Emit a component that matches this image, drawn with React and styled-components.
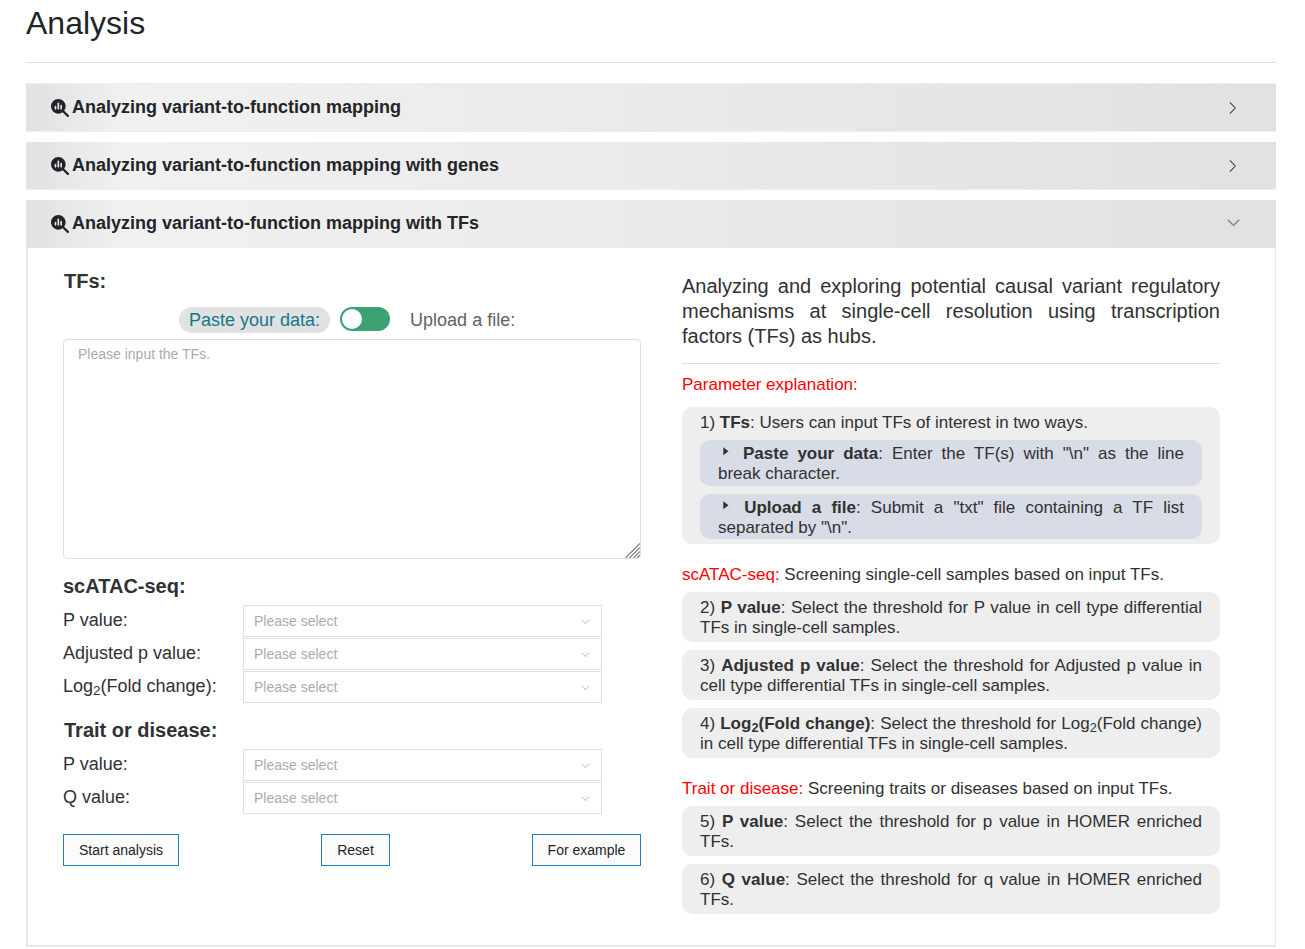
import React from "react";
import styled, { createGlobalStyle } from "styled-components";
import { FaMagnifyingGlassChart } from "react-icons/fa6";

const GlobalStyle = createGlobalStyle`
  *, *::before, *::after { box-sizing: border-box; }
  body {
    margin: 0;
    background: #fff;
    color: #212529;
    font-family: "Liberation Sans", Arial, sans-serif;
  }
  sub { font-size: 75%; line-height: 0; position: relative; bottom: -0.25em; vertical-align: baseline; }
`;

const Page = styled.main`
  padding: 4px 29px 0 26px;
`;

const Title = styled.h2`
  margin: 0;
  padding-bottom: 20px;
  font-size: 32px;
  font-weight: 400;
  line-height: 38px;
  border-bottom: 1px solid #dcdfe6;
`;

const Accordion = styled.div`
  display: flex;
  flex-direction: column;
  gap: 10px;
  margin-top: 20px;
  border-top: 1px solid #ebeef5;
`;

const PanelHeader = styled.button`
  display: flex;
  align-items: center;
  width: 100%;
  height: 48px;
  padding: 0 35px 2px 25px;
  border: 0;
  border-bottom: 1px solid ${(p) => (p.$open ? "transparent" : "#ebeef5")};
  background: linear-gradient(to right, #e1e1e1, #f1f1f1 8%, #e1e1e1) border-box;
  color: #212529;
  font: bold 18px/26px "Liberation Sans", Arial, sans-serif;
  text-align: left;
`;

const HeaderLabel = styled.span`
  flex: 1;
  margin-left: 3px;
`;

const HeaderIcon = styled(FaMagnifyingGlassChart)`
  width: 18px;
  height: 18px;
  margin-top: 2px;
`;

const HeaderArrow = styled.svg`
  width: 16px;
  height: 16px;
  margin-top: 2px;
  fill: ${(p) => (p.$open ? "#85878c" : "#303133")};
  stroke: ${(p) => (p.$open ? "#85878c" : "none")};
  stroke-width: 40;
  transform: ${(p) => (p.$open ? "translate(0.5px, -1.5px) rotate(90deg)" : "translateX(-0.5px)")};
`;

const PanelBody = styled.div`
  display: grid;
  grid-template-columns: 578px 538px;
  column-gap: 41px;
  height: 699px;
  padding: 20px 0 0 35px;
  border: solid #e4e7ed;
  border-width: 0 1px 2px 2px;
  color: #303133;
`;

const FormColumn = styled.div`
  display: flex;
  flex-direction: column;
`;

const SectionTitle = styled.h3`
  margin: ${(p) => p.$top || 0}px 0 0;
  padding-left: ${(p) => p.$indent || 0}px;
  font-size: 20px;
  font-weight: bold;
  line-height: 26px;
`;

const ModeRow = styled.div`
  display: flex;
  align-items: flex-start;
  height: 32px;
  margin-top: 13px;
  padding-left: 116px;
  font-size: 18px;
  line-height: 26px;
`;

const ActiveMode = styled.span`
  padding: 0 10px;
  border-radius: 13px;
  background: #e1e1e1;
  color: #11788c;
`;

const OtherMode = styled.span`
  margin-left: 20px;
  color: #606266;
`;

const Toggle = styled.span`
  display: flex;
  align-items: center;
  width: 50px;
  height: 24px;
  margin-left: 10px;
  padding-left: 2px;
  border-radius: 12px;
  background: #3ca272;
`;

const Knob = styled.span`
  width: 20px;
  height: 20px;
  border-radius: 50%;
  background: #fff;
`;

const InputArea = styled.div`
  position: relative;
  height: 220px;
`;

const TextArea = styled.textarea`
  display: block;
  width: 100%;
  height: 100%;
  padding: 4px 14px;
  border: 1px solid #dcdfe6;
  border-radius: 4px;
  outline: 0;
  resize: none;
  font: 14px/21px "Liberation Sans", Arial, sans-serif;
  &::placeholder { color: #a8abb2; opacity: 1; }
`;

const Grip = styled.svg`
  position: absolute;
  right: 1px;
  bottom: 1px;
  width: 15px;
  height: 15px;
  stroke: #7a7a7a;
  stroke-width: 1.1;
`;

const Field = styled.div`
  display: flex;
  height: 33px;
`;

const FieldLabel = styled.label`
  width: 180px;
  font-size: 18px;
  line-height: 30px;
`;

const SelectBox = styled.div`
  display: flex;
  align-items: center;
  justify-content: space-between;
  width: 359px;
  height: 32px;
  padding: 0 10px;
  border: 1px solid #dcdfe6;
  color: #a8abb2;
  font-size: 14px;
`;

const SelectArrow = styled.svg`
  width: 11px;
  height: 11px;
  fill: #a8abb2;
  transform: rotate(90deg);
`;

const Fields = styled.div`
  margin-top: 6px;
`;

const Actions = styled.div`
  display: flex;
  justify-content: space-between;
  margin-top: 19px;
`;

const ActionButton = styled.button`
  width: ${(p) => p.$width}px;
  height: 32px;
  padding: 0;
  border: 1px solid #1f7fc4;
  background: #fbfbfb;
  color: #212529;
  font: 14px "Liberation Sans", Arial, sans-serif;
`;

const HelpColumn = styled.div`
  font-size: 17px;
  line-height: 20px;
  text-align: justify;
`;

const Intro = styled.p`
  margin: 0;
  padding: 6px 0 14px;
  border-bottom: 1px solid #dcdfe6;
  font-size: 20px;
  line-height: 25px;
`;

const HelpTitle = styled.p`
  margin: ${(p) => p.$top}px 0 ${(p) => p.$bottom}px;
`;

const Red = styled.span`
  color: #f00;
`;

const HelpBox = styled.div`
  padding: 6px 18px ${(p) => (p.$nested ? 5 : 4)}px;
  border-radius: 10px;
  background: #eee;
  & + & { margin-top: 8px; }
`;

const SubBox = styled.div`
  height: ${(p) => p.$height}px;
  margin-top: ${(p) => p.$gap}px;
  padding: 4px 18px 0;
  border-radius: 10px;
  background: #d8dce6;
`;

const Bullet = styled.svg`
  width: 16px;
  height: 12px;
  fill: #303133;
  vertical-align: 0;
`;

const ARROW =
  "M340.864 149.312a30.592 30.592 0 0 0 0 42.752L652.736 512 340.864 831.872a30.592 30.592 0 0 0 0 42.752 29.12 29.12 0 0 0 41.728 0L714.24 534.336a32 32 0 0 0 0-44.672L382.592 149.376a29.12 29.12 0 0 0-41.728 0z";

function Header({ open, children }) {
  return (
    <PanelHeader $open={open} type="button" aria-expanded={!!open}>
      <HeaderIcon />
      <HeaderLabel>{children}</HeaderLabel>
      <HeaderArrow $open={open} viewBox="0 0 1024 1024">
        <path d={ARROW} />
      </HeaderArrow>
    </PanelHeader>
  );
}

function SelectField({ label }) {
  return (
    <Field>
      <FieldLabel>{label}</FieldLabel>
      <SelectBox>
        <span>Please select</span>
        <SelectArrow viewBox="0 0 1024 1024">
          <path d={ARROW} />
        </SelectArrow>
      </SelectBox>
    </Field>
  );
}

function Triangle() {
  return (
    <Bullet viewBox="0 0 16 12">
      <path d="M5.3 0.3 L10.5 4.3 L5.3 8.3 Z" />
    </Bullet>
  );
}

const log2 = (
  <>
    Log<sub>2</sub>(Fold change)
  </>
);

export default function App() {
  return (
    <Page>
      <GlobalStyle />
      <Title>Analysis</Title>
      <Accordion>
        <Header>Analyzing variant-to-function mapping</Header>
        <Header>Analyzing variant-to-function mapping with genes</Header>
        <section>
          <Header open>Analyzing variant-to-function mapping with TFs</Header>
          <PanelBody>
            <FormColumn>
              <SectionTitle $indent={1}>TFs:</SectionTitle>
              <ModeRow>
                <ActiveMode>Paste your data:</ActiveMode>
                <Toggle>
                  <Knob />
                </Toggle>
                <OtherMode>Upload a file:</OtherMode>
              </ModeRow>
              <InputArea>
                <TextArea placeholder="Please input the TFs." />
                <Grip viewBox="0 0 15 15">
                  <path d="M0.5 15 L15 0.5 M4.5 15 L15 4.5 M8.5 15 L15 8.5 M12 15 L15 12" />
                </Grip>
              </InputArea>
              <SectionTitle $top={14}>scATAC-seq:</SectionTitle>
              <Fields>
                <SelectField label="P value:" />
                <SelectField label="Adjusted p value:" />
                <SelectField label={<>{log2}:</>} />
              </Fields>
              <SectionTitle $top={13} $indent={1}>
                Trait or disease:
              </SectionTitle>
              <Fields>
                <SelectField label="P value:" />
                <SelectField label="Q value:" />
              </Fields>
              <Actions>
                <ActionButton $width={116}>Start analysis</ActionButton>
                <ActionButton $width={69}>Reset</ActionButton>
                <ActionButton $width={109}>For example</ActionButton>
              </Actions>
            </FormColumn>
            <HelpColumn>
              <Intro>
                Analyzing and exploring potential causal variant regulatory mechanisms at single-cell
                resolution using transcription factors (TFs) as hubs.
              </Intro>
              <HelpTitle $top={11} $bottom={12}>
                <Red>Parameter explanation:</Red>
              </HelpTitle>
              <HelpBox $nested>
                1) <b>TFs</b>: Users can input TFs of interest in two ways.
                <SubBox $height={46} $gap={7}>
                  <Triangle /> <b>Paste your data</b>: Enter the TF(s) with "\n" as the line break
                  character.
                </SubBox>
                <SubBox $height={45} $gap={8}>
                  <Triangle /> <b>Upload a file</b>: Submit a "txt" file containing a TF list
                  separated by "\n".
                </SubBox>
              </HelpBox>
              <HelpTitle $top={21} $bottom={7}>
                <Red>scATAC-seq:</Red> Screening single-cell samples based on input TFs.
              </HelpTitle>
              <HelpBox>
                2) <b>P value</b>: Select the threshold for P value in cell type differential TFs in
                single-cell samples.
              </HelpBox>
              <HelpBox>
                3) <b>Adjusted p value</b>: Select the threshold for Adjusted p value in cell type
                differential TFs in single-cell samples.
              </HelpBox>
              <HelpBox>
                4) <b>{log2}</b>: Select the threshold for {log2} in cell type differential TFs in
                single-cell samples.
              </HelpBox>
              <HelpTitle $top={21} $bottom={7}>
                <Red>Trait or disease:</Red> Screening traits or diseases based on input TFs.
              </HelpTitle>
              <HelpBox>
                5) <b>P value</b>: Select the threshold for p value in HOMER enriched TFs.
              </HelpBox>
              <HelpBox>
                6) <b>Q value</b>: Select the threshold for q value in HOMER enriched TFs.
              </HelpBox>
            </HelpColumn>
          </PanelBody>
        </section>
      </Accordion>
    </Page>
  );
}
